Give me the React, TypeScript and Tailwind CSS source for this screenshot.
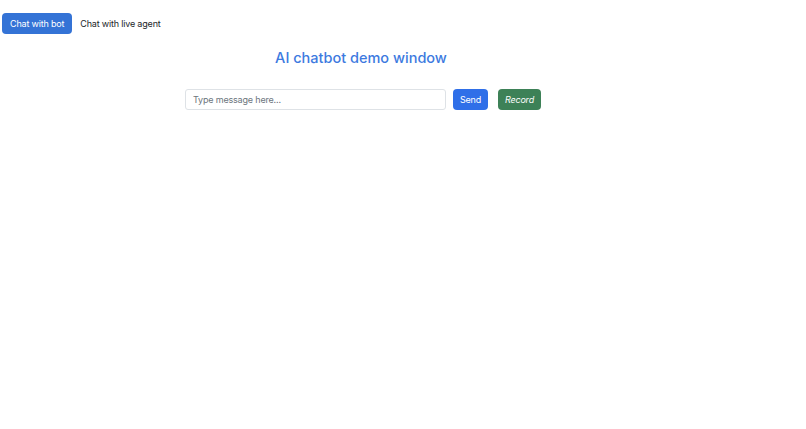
export default function App() {
  return (
    <div className="min-h-screen bg-white font-['Inter','Liberation_Sans',sans-serif] text-[#212529]">
      <nav className="flex items-center gap-[8px] px-[2px] pt-[13px]">
        <button className="h-[21px] rounded-[4px] bg-[#3473d6] px-[8px] text-[9px] leading-none tracking-[-0.02em] text-white">
          Chat with bot
        </button>
        <button className="h-[21px] text-[9px] leading-none tracking-[-0.02em] text-[#212529]">
          Chat with live agent
        </button>
      </nav>
      <div className="w-[726px]">
        <h1 className="mt-[14px] pr-[4px] text-center text-[14.5px] font-medium leading-[20px] text-[#3d7ae0]">
          AI chatbot demo window
        </h1>
        <div className="mt-[21px] flex items-center justify-center">
          <input
            className="h-[21px] w-[261px] rounded-[3px] border border-[#dee2e6] px-[7px] text-[9px] tracking-[-0.02em] outline-none placeholder:text-[#6c757d]"
            placeholder="Type message here..."
          />
          <button className="ml-[7px] h-[21px] w-[35px] rounded-[4px] bg-[#2f6fe8] text-[9px] tracking-[-0.02em] text-white">
            Send
          </button>
          <button className="ml-[10px] h-[21px] w-[43px] rounded-[4px] bg-[#3d8157] text-[9px] italic tracking-[-0.02em] text-white">
            Record
          </button>
        </div>
      </div>
    </div>
  );
}
